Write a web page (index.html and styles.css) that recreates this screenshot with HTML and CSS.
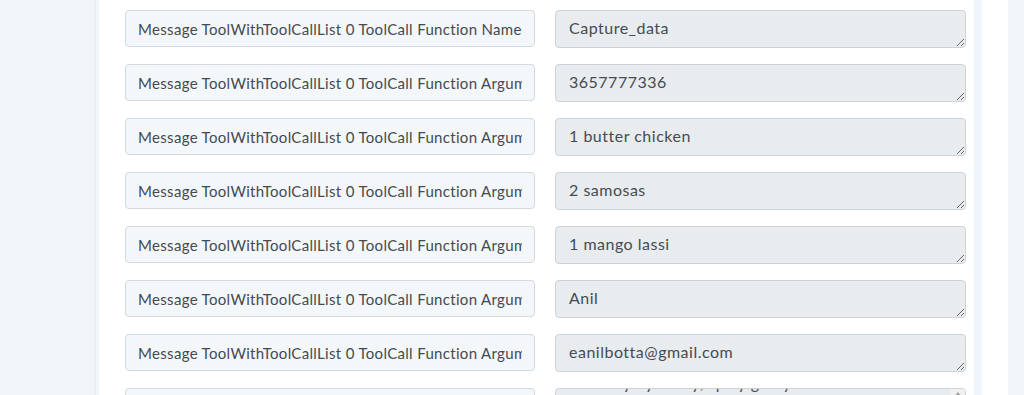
FILE: index.html
```html
<!DOCTYPE html>
<html>
<head>
<meta charset="utf-8">
<link rel="stylesheet" href="styles.css">
</head>
<body>
<div class="layout">
  <div class="gutter"></div>
  <div class="panel">
    <div class="grid">
      <input class="key" readonly value="Message ToolWithToolCallList 0 ToolCall Function Name">
      <textarea class="val" readonly rows="1">Capture_data</textarea>
      <input class="key" readonly value="Message ToolWithToolCallList 0 ToolCall Function Arguments Phone">
      <textarea class="val" readonly rows="1">3657777336</textarea>
      <input class="key" readonly value="Message ToolWithToolCallList 0 ToolCall Function Arguments Item 1">
      <textarea class="val" readonly rows="1">1 butter chicken</textarea>
      <input class="key" readonly value="Message ToolWithToolCallList 0 ToolCall Function Arguments Item 2">
      <textarea class="val" readonly rows="1">2 samosas</textarea>
      <input class="key" readonly value="Message ToolWithToolCallList 0 ToolCall Function Arguments Item 3">
      <textarea class="val" readonly rows="1">1 mango lassi</textarea>
      <input class="key" readonly value="Message ToolWithToolCallList 0 ToolCall Function Arguments Name">
      <textarea class="val" readonly rows="1">Anil</textarea>
      <input class="key" readonly value="Message ToolWithToolCallList 0 ToolCall Function Arguments Email">
      <textarea class="val" readonly rows="1">eanilbotta@gmail.com</textarea>
      <input class="key" readonly value="Message ToolWithToolCallList 0 ToolCall Function Arguments Notes">
      <div class="val scrolled">
        <div class="scrolled-text">Delivery by today, spicy gravy</div>
        <div class="scroll-track"><div class="scroll-up"></div></div>
      </div>
    </div>
  </div>
  <div class="strip"></div>
  <div class="side"></div>
  <div class="rest"></div>
</div>
</body>
</html>
```
FILE: styles.css
```css
html, body {
  margin: 0;
  padding: 0;
  height: 395px;
  overflow: hidden;
  background: #f3f6f9;
  font-family: Lato, "Open Sans", sans-serif;
}
.layout {
  display: flex;
  height: 395px;
}
.gutter {
  width: 96px;
  flex: none;
  background: #f3f6f9;
  box-shadow: inset -3px 0 3px -2px #e3e8ee;
}
.panel {
  width: 875px;
  flex: none;
  background: #ffffff;
  padding: 10px 0 0 26px;
  box-sizing: border-box;
  margin-left: 3px;
}
.grid {
  display: grid;
  grid-template-columns: 410px 411px;
  column-gap: 20px;
  row-gap: 16px;
  align-items: start;
}
.key {
  box-sizing: border-box;
  width: 410px;
  height: 37px;
  padding: 0 12px;
  border: 1px solid #d3d9df;
  border-radius: 4px;
  background: #f4f7fa;
  color: #444a50;
  font-family: Lato, sans-serif;
  font-size: 15px;
  letter-spacing: 0.32px;
  outline: none;
}
.val {
  box-sizing: border-box;
  width: 411px;
  height: 38px;
  padding: 5px 13px;
  border: 1px solid #cdd2d8;
  border-radius: 4px;
  background: #e9ecef;
  color: #454b51;
  font-family: Lato, sans-serif;
  font-size: 16px;
  letter-spacing: 0.5px;
  line-height: 24px;
  outline: none;
  resize: vertical;
  overflow: hidden;
  display: block;
}
.scrolled {
  position: relative;
  overflow: hidden;
}
.scrolled-text {
  margin-top: -23px;
  white-space: nowrap;
}
.scroll-track {
  position: absolute;
  right: 0;
  top: 0;
  width: 15px;
  height: 100%;
  background: #f1f1f1;
}
.scroll-up {
  margin: 3px auto 0;
  width: 0;
  height: 0;
  border-left: 4px solid transparent;
  border-right: 4px solid transparent;
  border-bottom: 5px solid #a3a3a3;
}
.strip {
  width: 8px;
  flex: none;
  background: #eef5fd;
}
.side {
  width: 26px;
  flex: none;
  background: #ffffff;
}
.rest {
  flex: 1;
  background: #f3f6f9;
}
```
